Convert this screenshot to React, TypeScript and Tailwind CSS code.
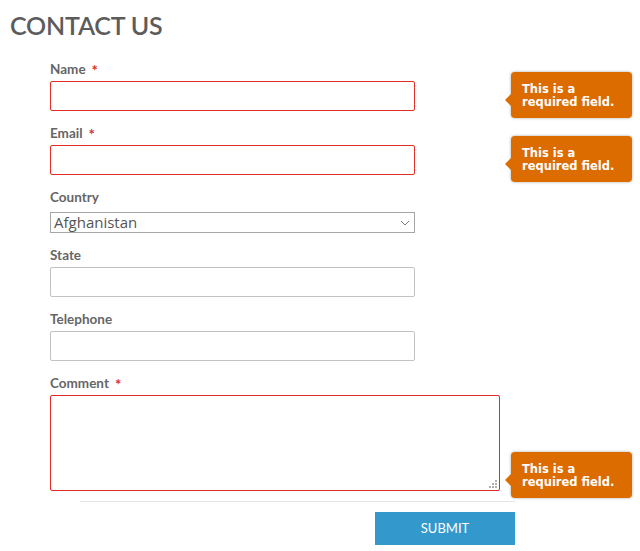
import React from "react";

const Tip = ({ top }: { top: number }) => (
  <div
    className="absolute left-[511px] w-[121px] h-[46px] rounded-[4px] bg-[#dc6b00] shadow-[0_0_3px_rgba(0,0,0,0.35)] pl-[11px] pt-[11px] text-white text-[11.5px] leading-[13px] font-bold"
    style={{ top, fontFamily: '"DejaVu Sans", Verdana, sans-serif' }}
  >
    <div className="absolute left-[-6px] top-[22px] w-0 h-0 border-y-[6px] border-y-transparent border-r-[6px] border-r-[#dc6b00]" />
    <div>This is a</div>
    <div>required field.</div>
  </div>
);

const Label = ({ text, req, mb = 3 }: { text: string; req?: boolean; mb?: number }) => (
  <div
    className="h-[18px] leading-[18px] text-[13.5px] font-bold text-[#666666] flex items-start"
    style={{ marginBottom: mb }}
  >
    <span>{text}</span>
    {req && <span className="ml-[6px] text-[#e02b27] text-[15px] leading-[20px]">*</span>}
  </div>
);

export default function App() {
  return (
    <div
      className="relative w-[640px] h-[551px] bg-white overflow-hidden"
      style={{ fontFamily: 'Lato, "Open Sans", sans-serif' }}
    >
      <h1 className="pl-[10px] pt-[10px] h-[60px] text-[25px] leading-[30px] font-semibold text-[#5c5c5c] tracking-[-0.2px]">
        CONTACT US
      </h1>
      <div className="pl-[50px]">
        <Label text="Name" req />
        <div className="w-[365px] h-[30px] border border-[#e02b27] rounded-[2px] bg-white" />
        <div className="mt-[13px]">
          <Label text="Email" req />
          <div className="w-[365px] h-[30px] border border-[#e02b27] rounded-[2px] bg-white" />
        </div>
        <div className="mt-[13px]">
          <Label text="Country" mb={6} />
          <div className="w-[365px] h-[21px] border border-[#a6a6a6] bg-white flex items-center justify-between pl-[3px] pr-[4px]">
            <span className="text-[15px] leading-[19px] text-[#555555]" style={{ fontFamily: '"Open Sans", Lato, sans-serif' }}>
              Afghanistan
            </span>
            <svg width="10" height="6" viewBox="0 0 10 6">
              <path d="M1 1 L5 5 L9 1" fill="none" stroke="#777" strokeWidth="1" />
            </svg>
          </div>
        </div>
        <div className="mt-[13px]">
          <Label text="State" />
          <div className="w-[365px] h-[30px] border border-[#c2c2c2] rounded-[2px] bg-white" />
        </div>
        <div className="mt-[13px]">
          <Label text="Telephone" />
          <div className="w-[365px] h-[30px] border border-[#c2c2c2] rounded-[2px] bg-white" />
        </div>
        <div className="mt-[13px]">
          <Label text="Comment" req />
          <div className="relative w-[450px] h-[96px] border border-[#e02b27] rounded-[2px] bg-white">
            <svg className="absolute right-[2px] bottom-[2px]" width="8" height="8" viewBox="0 0 8 8">
              <rect x="6" y="0" width="2" height="2" fill="#b0b0b0" />
              <rect x="3" y="3" width="2" height="2" fill="#b0b0b0" />
              <rect x="6" y="3" width="2" height="2" fill="#b0b0b0" />
              <rect x="0" y="6" width="2" height="2" fill="#b0b0b0" />
              <rect x="3" y="6" width="2" height="2" fill="#b0b0b0" />
              <rect x="6" y="6" width="2" height="2" fill="#b0b0b0" />
            </svg>
          </div>
        </div>
      </div>
      <div className="ml-[80px] mt-[10px] w-[435px] border-t border-[#e5e5e5]" />
      <div className="ml-[375px] mt-[10px] w-[140px] h-[33px] bg-[#3399cc] flex items-center justify-center text-white text-[13px]">
        SUBMIT
      </div>
      <Tip top={72} />
      <Tip top={136} />
      <Tip top={452} />
    </div>
  );
}
